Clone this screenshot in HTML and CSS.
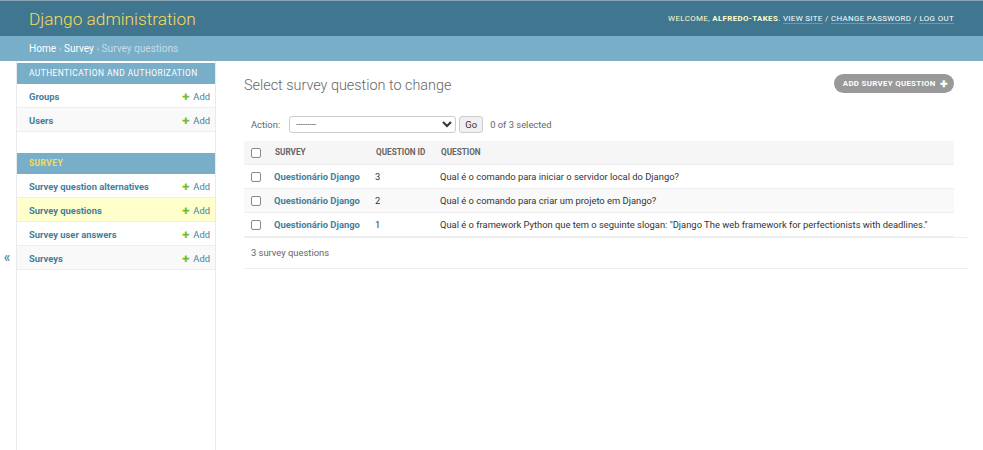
FILE: index.html
```html
<!DOCTYPE html>
<html lang="en">
<head>
<meta charset="utf-8">
<title>Select survey question to change | Django site admin</title>
<link rel="stylesheet" href="styles.css">
</head>
<body>
<div class="header">
  <div class="branding">Django administration</div>
  <div class="user-tools">
    Welcome, <strong>alfredo-takes</strong>.
    <a href="#">View site</a> /
    <a href="#">Change password</a> /
    <a href="#">Log out</a>
  </div>
</div>
<div class="breadcrumbs">
  <a href="#">Home</a> <span class="sep">›</span> <a href="#">Survey</a> <span class="sep">›</span> <span class="current">Survey questions</span>
</div>
<div class="main">
  <button class="toggle" type="button">«</button>
  <nav class="sidebar">
    <div class="module">
      <div class="caption">Authentication and Authorization</div>
      <div class="row"><a class="model" href="#">Groups</a><a class="add" href="#"><span class="plus">✚</span>Add</a></div>
      <div class="row alt"><a class="model" href="#">Users</a><a class="add" href="#"><span class="plus">✚</span>Add</a></div>
    </div>
    <div class="module">
      <div class="caption current-app">Survey</div>
      <div class="row"><a class="model" href="#">Survey question alternatives</a><a class="add" href="#"><span class="plus">✚</span>Add</a></div>
      <div class="row current"><a class="model" href="#">Survey questions</a><a class="add" href="#"><span class="plus">✚</span>Add</a></div>
      <div class="row"><a class="model" href="#">Survey user answers</a><a class="add" href="#"><span class="plus">✚</span>Add</a></div>
      <div class="row alt"><a class="model" href="#">Surveys</a><a class="add" href="#"><span class="plus">✚</span>Add</a></div>
    </div>
  </nav>
  <div class="content">
    <div class="content-head">
      <h1>Select survey question to change</h1>
      <a class="addlink" href="#">Add survey question <span class="addplus">✚</span></a>
    </div>
    <div class="changelist">
      <div class="actions">
        <label>Action:</label>
        <select class="action-select"><option>---------</option></select>
        <button class="go" type="button">Go</button>
        <span class="counter">0 of 3 selected</span>
      </div>
      <table class="results">
        <colgroup><col class="c1"><col class="c2"><col class="c3"><col></colgroup>
        <thead>
          <tr><th><span class="cb"></span></th><th>Survey</th><th>Question ID</th><th>Question</th></tr>
        </thead>
        <tbody>
          <tr><td><span class="cb"></span></td><td><a href="#">Questionário Django</a></td><td>3</td><td>Qual é o comando para iniciar o servidor local do Django?</td></tr>
          <tr class="alt"><td><span class="cb"></span></td><td><a href="#">Questionário Django</a></td><td>2</td><td>Qual é o comando para criar um projeto em Django?</td></tr>
          <tr><td><span class="cb"></span></td><td><a href="#">Questionário Django</a></td><td>1</td><td>Qual é o framework Python que tem o seguinte slogan: "Django The web framework for perfectionists with deadlines."</td></tr>
        </tbody>
      </table>
      <p class="paginator">3 survey questions</p>
    </div>
  </div>
</div>
</body>
</html>
```
FILE: styles.css
```css
* { box-sizing: border-box; }
html, body { margin: 0; padding: 0; }
body {
  font-family: Roboto, "Liberation Sans", sans-serif;
  color: #333;
  background: #fff;
  font-size: 9.4px;
  height: 450px;
  overflow: hidden;
}
a { text-decoration: none; color: #447e9b; }

.header {
  height: 36px;
  background: #417690;
  border-top: 1px solid #88a4b3;
  display: flex;
  align-items: center;
  justify-content: space-between;
  padding: 0 29px;
}
.branding {
  color: #f5dd5d;
  font-size: 17.3px;
  font-weight: 300;
}
.user-tools {
  color: #ffc;
  font-size: 7.9px;
  letter-spacing: 0.36px;
  text-transform: uppercase;
  margin-top: -1px;
}
.user-tools strong { font-weight: 700; }
.user-tools a {
  color: #fff;
  border-bottom: 1px solid rgba(255,255,255,0.25);
}

.breadcrumbs {
  height: 25px;
  line-height: 25px;
  background: #79aec8;
  padding: 0 29px;
  font-size: 10.1px;
  color: #c4dce8;
}
.breadcrumbs a { color: #fff; }
.breadcrumbs .sep { font-size: 9px; }

.main {
  display: flex;
  height: 389px;
}
.toggle {
  flex: 0 0 17px;
  width: 17px;
  border: 0;
  border-right: 1px solid #eaeaea;
  background: #fff;
  color: #447e9b;
  font-size: 15px;
  padding: 2px 2px 0 0;
  display: flex;
  align-items: center;
  justify-content: center;
  font-family: Roboto, sans-serif;
}
.sidebar {
  flex: 0 0 199px;
  border-right: 1px solid #eaeaea;
  padding-top: 2px;
}
.module { margin-bottom: 21px; }
.caption {
  background: #79aec8;
  color: #fff;
  font-size: 8.4px;
  letter-spacing: 0.45px;
  text-transform: uppercase;
  height: 21px;
  line-height: 21px;
  padding: 0 12px;
}
.caption.current-app {
  color: #f5dd5d;
  font-weight: 700;
}
.row {
  display: flex;
  justify-content: space-between;
  align-items: center;
  height: 24px;
  border-bottom: 1px solid #eee;
  padding: 1px 5px 0 12px;
  font-size: 9.4px;
}
.row.alt { background: #f9f9f9; }
.row.current { background: #ffc; }
.model { font-weight: 700; }
.add { color: #447e9b; }
.plus {
  color: #70bf2b;
  font-size: 9px;
  margin-right: 3px;
}

.content {
  flex: 1;
  padding: 13px 15px 0 28px;
}
.content-head {
  display: flex;
  justify-content: space-between;
  align-items: flex-start;
}
h1 {
  margin: 3px 0 0;
  font-size: 14.4px;
  line-height: 18px;
  font-weight: 300;
  color: #666;
}
.addlink {
  display: flex;
  align-items: center;
  height: 19px;
  margin-right: 14px;
  padding: 0 6px 0 9px;
  border-radius: 10px;
  background: #999;
  color: #fff;
  font-size: 7.9px;
  font-weight: 700;
  letter-spacing: 0.3px;
  text-transform: uppercase;
}
.addplus {
  font-size: 9px;
  margin-left: 4px;
}

.changelist { margin-top: 21px; }
.actions {
  display: flex;
  align-items: center;
  height: 17px;
  padding-left: 7px;
  color: #666;
  font-size: 9.4px;
}
.action-select {
  margin-left: 9px;
  width: 167px;
  height: 17px;
  font-size: 8px;
  font-family: Roboto, sans-serif;
  border: 1px solid #ccc;
  border-radius: 3px;
  background: #fff;
  color: #333;
  padding: 0 2px;
}
.go {
  margin-left: 3px;
  width: 24px;
  height: 17px;
  border: 1px solid #ccc;
  border-radius: 3px;
  background: #f0f0f0;
  font-family: Roboto, sans-serif;
  font-size: 9.4px;
  color: #333;
  padding: 0;
}
.counter { margin-left: 7px; }

.results {
  margin-top: 8px;
  width: 710px;
  border-collapse: collapse;
  table-layout: fixed;
}
.c1 { width: 24px; }
.c2 { width: 101px; }
.c3 { width: 65px; }
.results th {
  background: #f6f6f6;
  height: 23px;
  text-align: left;
  padding: 0 0 0 7px;
  font-size: 8.2px;
  font-weight: 700;
  color: #666;
  text-transform: uppercase;
  border-bottom: 1px solid #eee;
}
.results td {
  height: 24px;
  padding: 0 0 0 6px;
  border-bottom: 1px solid #eee;
  white-space: nowrap;
  font-size: 9.4px;
  color: #333;
}
.results td:first-child, .results th:first-child { padding-left: 7px; }
.results td a { font-weight: 700; }
.results tr.alt td { background: #f9f9f9; }
.cb {
  display: inline-block;
  width: 10px;
  height: 10px;
  border: 1px solid #888;
  border-radius: 2px;
  background: #fff;
  vertical-align: middle;
}
.paginator {
  margin: 0;
  height: 32px;
  line-height: 30px;
  border-top: 1px solid #eee;
  border-bottom: 1px solid #eee;
  padding-left: 7px;
  color: #666;
  font-size: 9.4px;
}
```
